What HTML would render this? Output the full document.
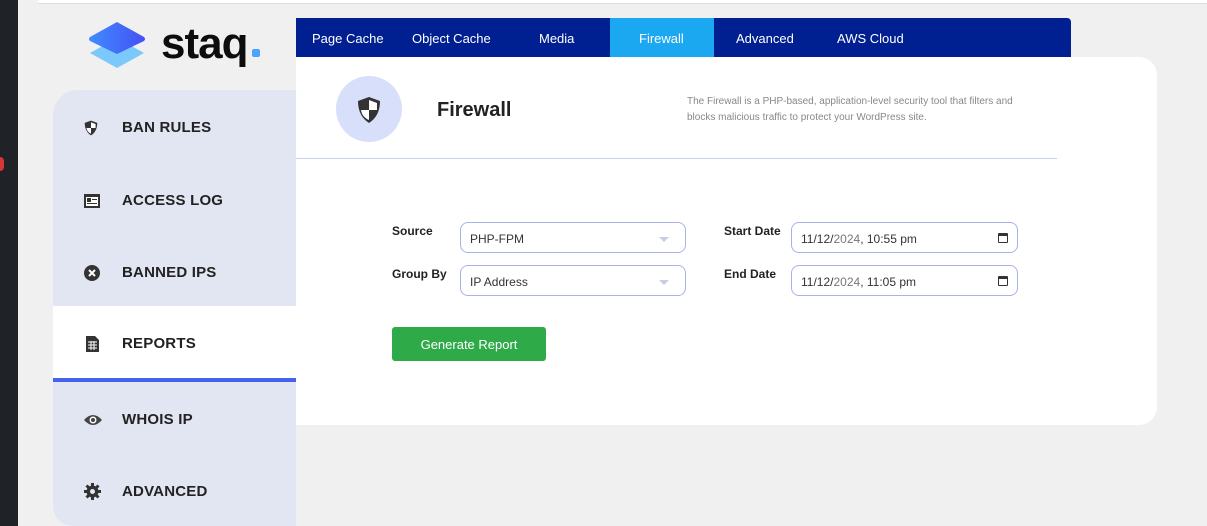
<!DOCTYPE html>
<html><head><meta charset="utf-8"><style>
*{box-sizing:border-box;margin:0;padding:0}
body{width:1207px;height:526px;overflow:hidden;background:#f0f0f1;font-family:"Liberation Sans",sans-serif;position:relative;color:#222}
.dark{position:absolute;left:0;top:0;width:18px;height:526px;background:#1f2327}
.topw{position:absolute;left:38px;top:0;width:1169px;height:4px;background:#fff;border-bottom:1px solid #ddd}
.nav{position:absolute;left:296px;top:18px;width:775px;height:39px;background:#001f91;border-radius:0 4px 0 0}
.nav span{position:absolute;top:13px;color:#fff;font-size:13px}
.fw{position:absolute;left:314px;top:0;width:104px;height:39px;background:#1ba8f1}
.card{position:absolute;left:296px;top:57px;width:861px;height:368px;background:#fff;border-radius:0 18px 18px 0}
.side{position:absolute;left:53px;top:90px;width:243px;height:436px;background:#e2e5f2;border-radius:25px 0 0 20px;overflow:hidden}
.item{position:absolute;left:0;width:243px;height:72px;display:flex;align-items:center;padding-top:3px}
.item b{position:absolute;left:69px;font-size:15px;color:#222;letter-spacing:.2px}
.item svg{position:absolute;left:31px}
.act{background:#fff;border-bottom:4px solid #4661ee;height:76px}
.lbl{position:absolute;font-size:12px;font-weight:bold}
.inp{position:absolute;height:31px;border:1px solid #a9b2e8;border-radius:8px;background:#fff;font-size:12px;padding:9px 0 0 9px;color:#333}
.tri{position:absolute;right:16px;top:14px;width:0;height:0;border-left:5px solid transparent;border-right:5px solid transparent;border-top:5px solid #c7cde8}
.cal{position:absolute;right:9px;top:10px;width:10px;height:10px;border:1.5px solid #333;border-top-width:3px;border-radius:1px}
</style></head><body>
<div class="dark"></div>
<div style="position:absolute;left:0;top:157px;width:4px;height:14px;background:#d63638;border-radius:0 7px 7px 0"></div>
<div class="topw"></div>
<svg style="position:absolute;left:87px;top:20px" width="60" height="50" viewBox="0 0 60 50">
<defs><linearGradient id="g" x1="0" x2="1"><stop offset="0" stop-color="#3f8cff"/><stop offset="1" stop-color="#4450f5"/></linearGradient></defs>
<path d="M30 18 L57 33 L30 48 L3 33Z" fill="#7bc8fb"/>
<path d="M30 2 L57 17 Q59 19 57 21 L30 34 L3 21 Q1 19 3 17Z" fill="url(#g)"/></svg>
<div style="position:absolute;left:161px;top:19px;font-size:44px;font-weight:bold;color:#0d0d0d;letter-spacing:-1px">staq</div>
<div style="position:absolute;left:252px;top:49px;width:8px;height:8px;background:#4aa3ff;border-radius:2px"></div>
<div class="card">
<div style="position:absolute;left:40px;top:19px;width:66px;height:66px;border-radius:50%;background:#d8dffa"></div>
<svg style="position:absolute;left:61px;top:39px" width="24" height="28" viewBox="0 0 24 28"><path d="M12 1 L23 5 Q23 20 12 27 Q1 20 1 5Z" fill="#333"/><path d="M12 4 L20 7 L20 14 L12 14Z M12 14 L4 14 Q5 21 12 24Z" fill="#fff"/></svg>
<div style="position:absolute;left:141px;top:42px;font-size:20px;font-weight:bold">Firewall</div>
<div style="position:absolute;left:391px;top:37px;font-size:10px;color:#888;line-height:16px;width:340px">The Firewall is a PHP-based, application-level security tool that filters and blocks malicious traffic to protect your WordPress site.</div>
<div style="position:absolute;left:0;top:101px;width:761px;height:1px;background:#c5d3f0"></div>
</div>
<div class="nav"><div class="fw"></div>
<span style="left:16px">Page Cache</span><span style="left:116px">Object Cache</span><span style="left:243px">Media</span><span style="left:343px">Firewall</span><span style="left:440px">Advanced</span><span style="left:541px">AWS Cloud</span></div>
<div class="side">
<div class="item" style="top:0"><svg width="14" height="16" viewBox="0 0 24 28"><path d="M12 1 L23 5 Q23 20 12 27 Q1 20 1 5Z" fill="#333"/><path d="M12 4 L20 7 L20 14 L12 14Z M12 14 L4 14 Q5 21 12 24Z" fill="#fff"/></svg><b>BAN RULES</b></div>
<div class="item" style="top:73px"><svg width="16" height="14" viewBox="0 0 16 14"><rect x="0" y="0" width="16" height="14" fill="#333"/><rect x="2" y="3" width="12" height="9" fill="#fff"/><rect x="3" y="4" width="4" height="4" fill="#333"/><rect x="8" y="5" width="5" height="1" fill="#333"/><rect x="3" y="9" width="10" height="1" fill="#333"/></svg><b>ACCESS LOG</b></div>
<div class="item" style="top:145px"><svg width="16" height="16" viewBox="0 0 16 16"><circle cx="8" cy="8" r="8" fill="#333"/><path d="M5 5L11 11M11 5L5 11" stroke="#fff" stroke-width="2"/></svg><b>BANNED IPS</b></div>
<div class="item act" style="top:216px"><svg width="13" height="16" viewBox="0 0 13 16" style="left:33px"><path d="M0 0H9L13 4V16H0Z" fill="#333"/><path d="M2 6H11M2 9H11M2 12H11M5 5V14M8 5V14" stroke="#fff" stroke-width="1"/></svg><b>REPORTS</b></div>
<div class="item" style="top:292px"><svg width="18" height="12" viewBox="0 0 18 12"><path d="M0 6Q9 -4 18 6Q9 16 0 6Z" fill="#444"/><circle cx="9" cy="6" r="3.5" fill="#fff"/><circle cx="9" cy="6" r="2" fill="#444"/></svg><b>WHOIS IP</b></div>
<div class="item" style="top:364px"><svg width="17" height="17" viewBox="0 0 17 17"><circle cx="8.5" cy="8.5" r="6" fill="#333"/><path d="M8.5 0V17M0 8.5H17M2.5 2.5L14.5 14.5M14.5 2.5L2.5 14.5" stroke="#333" stroke-width="3"/><circle cx="8.5" cy="8.5" r="2.5" fill="#e2e5f2"/></svg><b>ADVANCED</b></div>
</div>
<div class="lbl" style="left:392px;top:224px">Source</div>
<div class="lbl" style="left:392px;top:267px">Group By</div>
<div class="lbl" style="left:724px;top:224px">Start Date</div>
<div class="lbl" style="left:724px;top:267px">End Date</div>
<div class="inp" style="left:460px;top:222px;width:226px">PHP-FPM<div class="tri"></div></div>
<div class="inp" style="left:460px;top:265px;width:226px">IP Address<div class="tri"></div></div>
<div class="inp" style="left:791px;top:222px;width:227px">11/12/<span style="color:#777">2024</span>, 10:55 pm<div class="cal"></div></div>
<div class="inp" style="left:791px;top:265px;width:227px">11/12/<span style="color:#777">2024</span>, 11:05 pm<div class="cal"></div></div>
<div style="position:absolute;left:392px;top:327px;width:154px;height:34px;background:#2eaa48;border-radius:3px;color:#fff;font-size:13px;text-align:center;line-height:35px">Generate Report</div>
</body></html>
